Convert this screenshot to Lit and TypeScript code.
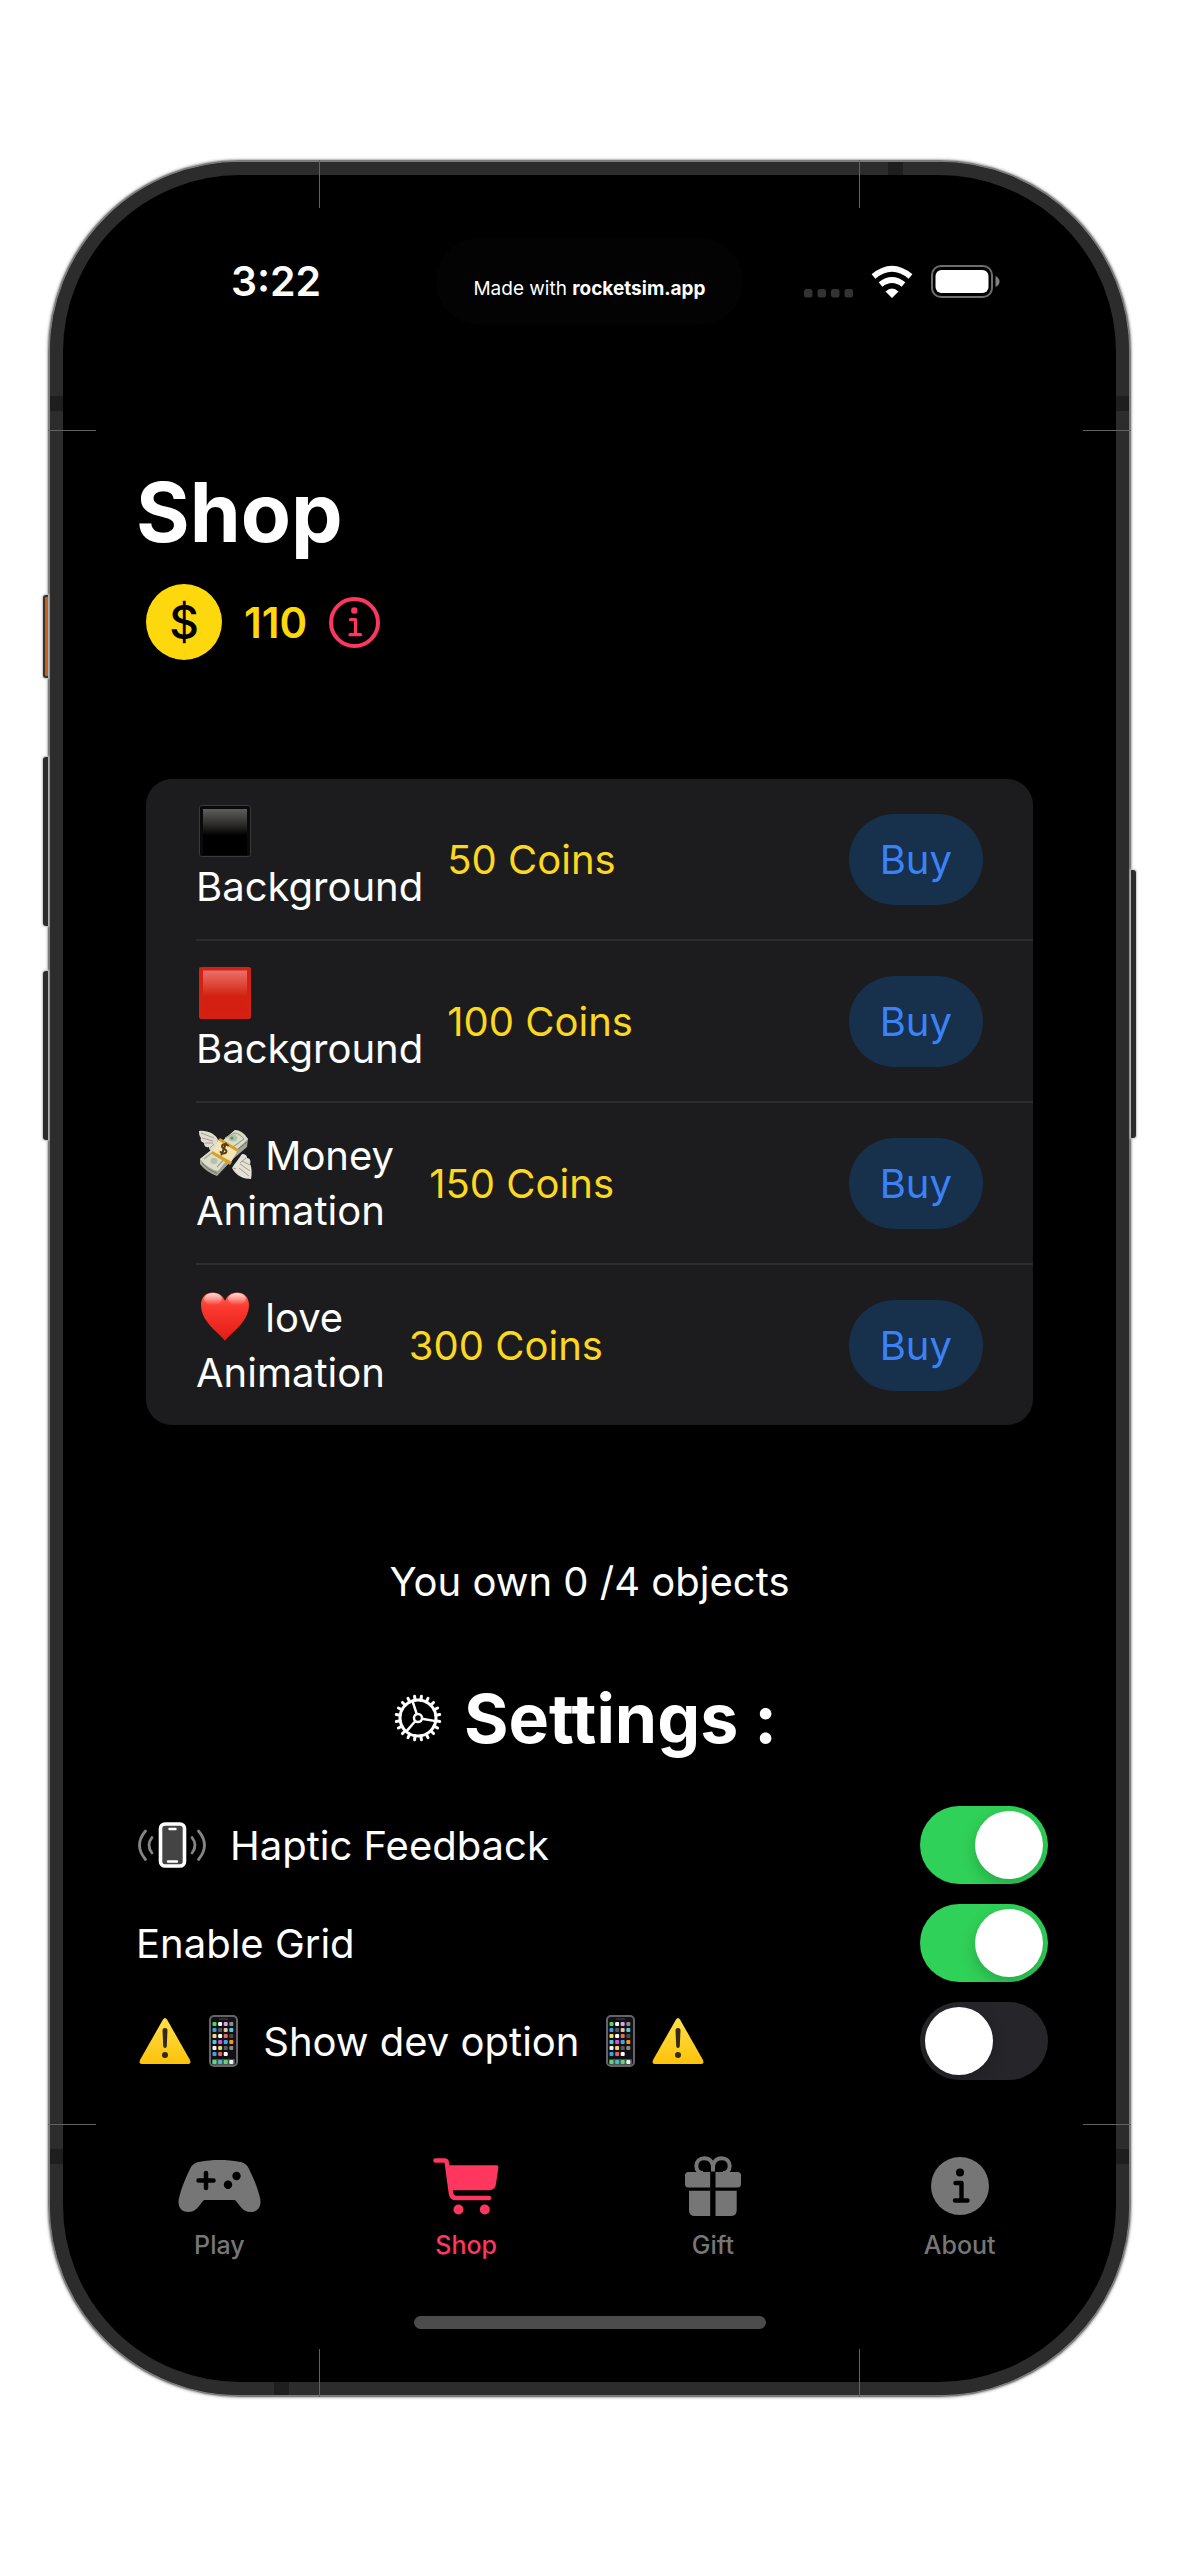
import { LitElement, html, svg, css, nothing } from "lit";
import type { TemplateResult } from "lit";
import { customElement, state } from "lit/decorators.js";
import { classMap } from "lit/directives/class-map.js";

type EmojiName = "black" | "red" | "money" | "heart" | "warning" | "phone";

interface ShopItem {
  emoji: EmojiName;
  first: string;
  second: string;
  price: number;
}

const ITEMS: ShopItem[] = [
  { emoji: "black", first: " ", second: "Background", price: 50 },
  { emoji: "red", first: " ", second: "Background", price: 100 },
  { emoji: "money", first: " Money ", second: "Animation", price: 150 },
  { emoji: "heart", first: " love", second: "Animation", price: 300 },
];

const APP_GRID = [
  ["#4cd964", "#f4f4f4", "#d9a8e0", "#8e8e93"],
  ["#3aa0e8", "#5a5a5e", "#d8c8a8", "#5ac8e0"],
  ["#f6dc6a", "#ffffff", "#e86a5a", "#4a4a4e"],
  ["#4fc8d8", "#d850e0", "#3aa8f0", "#ff9500"],
  ["#f4f4f4", "#f0d860", "#5a5a5e", "#8a8a8e"],
  ["#38a8e8", "#e86060", "#ffffff"],
];
const DOCK = ["#5fd878", "#48b8d8", "#5fd878", "#e8f4f0"];

const emojiArt: Record<EmojiName, () => TemplateResult> = {
  black: () => svg`
    <defs><linearGradient id="gk" x2="0" y2="1"><stop offset="0" stop-color="#5e5e5e"/><stop offset=".35" stop-color="#2a2928"/><stop offset=".58" stop-color="#000"/></linearGradient></defs>
    <rect x="3.500" y=".5" width="51" height="51" rx="2" fill="#0a0a0a" stroke="#3a3a3a"/>
    <rect x="7" y="4" width="44" height="46" fill="url(#gk)"/>`,
  red: () => svg`
    <defs><linearGradient id="gr" x2="0" y2="1"><stop offset="0" stop-color="#ea7068"/><stop offset=".35" stop-color="#dc4334"/><stop offset=".58" stop-color="#d32011"/></linearGradient></defs>
    <rect x="3" y="0" width="52" height="52" rx="2" fill="#d32214"/>
    <rect x="7" y="3.500" width="44" height="44" fill="url(#gr)"/>`,
  money: () => svg`
    <g transform="translate(3 1)">
      <path d="M1 29 22 12 36 0Q44 0 49 9L48 17 34 29 18 46Q7 42 1 34Z" fill="#a3a596"/>
      <path d="M1 29 20 14 36 0Q43 1 49 9 34 22 19 41 9 39 1 29Z" fill="#dcddcb"/>
      <path d="M5 29 19 18M18 37 30 24M26 8 36 3Q41 4 45 9L34 17" fill="none" stroke="#9fa48f" stroke-width="1.2"/>
      <path d="M3 33Q9 40 18 43.500M38 20 48 12" fill="none" stroke="#72756a" stroke-width="1"/>
      <ellipse cx="34" cy="8" rx="4.500" ry="3.500" fill="#b6c2a6"/><circle cx="33" cy="8" r="1.600" fill="#4d9a63"/>
      <ellipse cx="15" cy="31" rx="3.500" ry="3" fill="#b6c2a6"/>
      <path d="M20 9 39 20 31 34 12 22Z" fill="#f3e5b8"/>
      <path d="M21 8 40 19.500 38.500 22 19.500 10.500ZM13.500 21 33 32 31 35 12 23.500Z" fill="#d9a026"/>
      <path d="M29 15.500c-2-2-6-1.500-6 1s5 2.500 4.500 5-4.500 2.500-6 .5M27 13.500 22.500 24.500" fill="none" stroke="#5a3d12" stroke-width="2" stroke-linecap="round"/>
      <path d="M0 1C8 0 17 4 19 10 18 14 16 18 13 21 11 21 10 19 10 17 7 18 5 16 5 13 2 12 1 10 2 8 0 6 0 3 0 1Z" fill="#dfdcd0"/>
      <path d="M2 3 15 8M3 8 14 11M6 13 14 13M11 18 15 14" stroke="#a39e90" stroke-width="1" fill="none"/>
      <path d="M52 49C45 49 37 46 33 38 36 33 39 30 43 24 46 24 48 25 48 28 51 28 52 31 51 34 53 37 53 45 52 49Z" fill="#e4e1d6"/>
      <path d="M50 46 40 38M51 41 41 34M51 35 43 31M47 28 41 33M37 39 34 38" stroke="#a39e90" stroke-width="1" fill="none"/>
    </g>`,
  heart: () => svg`
    <defs>
      <linearGradient id="gh" x2="0" y2="1"><stop offset="0" stop-color="#ff6a5c"/><stop offset=".3" stop-color="#fb3a30"/><stop offset="1" stop-color="#e31a14"/></linearGradient>
      <linearGradient id="gs" x2="0" y2="1"><stop offset="0" stop-color="#fff" stop-opacity=".75"/><stop offset="1" stop-color="#fff" stop-opacity="0"/></linearGradient>
    </defs>
    <path d="M29 50C26 44 5 32 5 14 5 6 10 1.500 17 1.500 23 1.500 27 5 29 10 31 5 35 1.500 41 1.500 48 1.500 53 6 53 14 53 32 32 44 29 50Z" fill="url(#gh)"/>
    <ellipse cx="17" cy="8" rx="9" ry="6" fill="url(#gs)"/>
    <ellipse cx="41" cy="8" rx="9" ry="6" fill="url(#gs)"/>`,
  warning: () => svg`
    <defs><linearGradient id="gw" x2="0" y2="1"><stop offset="0" stop-color="#ffe04a"/><stop offset="1" stop-color="#fdc20a"/></linearGradient></defs>
    <path d="M27 4.500Q29 1.500 31 4.500L54 45Q55.500 49 51.500 49H6.500Q2.500 49 4 45Z" fill="url(#gw)"/>
    <path d="M26.500 15Q26.500 13 29 13T31.500 15L30.800 31Q30.600 33 29 33T27.200 31Z" fill="#33291a"/>
    <circle cx="29" cy="40" r="3" fill="#33291a"/>`,
  phone: () => svg`
    <rect x="16" y="1" width="27" height="50" rx="4" fill="#111113" stroke="#66646a" stroke-width="2"/>
    <rect x="25" y="3" width="9" height="2" rx="1" fill="#2c2c2e"/>
    ${APP_GRID.map((row, r) => row.map((c, i) => svg`<rect x=${18.5 + i * 5.6} y=${7 + r * 6} width="4" height="4" rx="1" fill=${c}/>`))}
    <rect x="18" y="44" width="23" height="6" rx="1" fill="#4c5450"/>
    ${DOCK.map((c, i) => svg`<rect x=${18.5 + i * 5.6} y="45" width="4" height="4" rx="1" fill=${c}/>`)}`,
};

const emoji = (name: EmojiName) =>
  html`<svg class="emoji" viewBox="0 0 58 52" aria-hidden="true">${emojiArt[name]()}</svg>`;

const tabArt = {
  play: svg`<svg width="83" height="52" viewBox="0 0 83 52" aria-hidden="true">
    <path fill="currentColor" d="M22 1.700C34-.5 49-.5 61 1.700 66 2.500 69 4.500 71 9 76 19 80 29 82 38 84 46 80 52 73 52 64 52 63 46 57 40H26C20 46 19 52 10 52 3 52-1 46 1 38 3 29 7 19 12 9 14 4.500 17 2.500 22 1.700Z"/>
    <path d="M28 13V28M20.500 20.500H35.500" stroke="#000" stroke-width="4.500" stroke-linecap="round"/>
    <circle cx="58.500" cy="16" r="4.200"/><circle cx="50" cy="24.700" r="4.200"/></svg>`,
  shop: svg`<svg width="66" height="57" viewBox="0 0 66 57" aria-hidden="true">
    <path d="M2.500 2.500H11.500Q13.500 2.500 13.800 4.500L18 35.500Q18.800 40 23 40H56" fill="none" stroke="currentColor" stroke-width="4.600" stroke-linecap="round"/>
    <path fill="currentColor" d="M15 7.200H63.500Q65.700 7.200 65.400 9.400L63 26Q62 32.200 56 32.200H19Z"/>
    <circle cx="25.500" cy="51.500" r="5" fill="currentColor"/><circle cx="51.800" cy="51.500" r="5" fill="currentColor"/></svg>`,
  gift: svg`<svg width="56" height="60" viewBox="0 0 56 60" aria-hidden="true">
    <path fill="currentColor" d="M3.500 16H25.200V31.500H3.500Q0 31.500 0 28V19.500Q0 16 3.500 16ZM30.500 16H52.500Q56 16 56 19.500V28Q56 31.500 52.500 31.500H30.500ZM4 34.800H25.200V60H10Q4 60 4 54ZM30.500 34.800H51.700V54Q51.700 60 45.700 60H30.500Z"/>
    <path fill="none" stroke="currentColor" stroke-width="4" d="M28 15.500V12C28 6 24.500 2.200 19.500 2.200 14.500 2.200 11.300 5.500 11.300 10 11.300 14.500 14.500 17 18 17M28 15.500V12C28 6 31.500 2.200 36.500 2.200 41.500 2.200 44.700 5.500 44.700 10 44.700 14.500 41.500 17 38 17"/></svg>`,
  about: svg`<svg width="58" height="58" viewBox="0 0 58 58" aria-hidden="true">
    <circle cx="29" cy="29" r="29" fill="currentColor"/><circle cx="29" cy="15.500" r="4"/>
    <path d="M24.500 26H30.500V43.500M24 43.500H36.500" fill="none" stroke="#000" stroke-width="4.400" stroke-linecap="round" stroke-linejoin="round"/></svg>`,
};

const TABS = [
  { id: "play", label: "Play" },
  { id: "shop", label: "Shop" },
  { id: "gift", label: "Gift" },
  { id: "about", label: "About" },
] as const;

const polar = (r: number, deg: number) => {
  const a = (deg * Math.PI) / 180;
  return `${(24 + r * Math.cos(a)).toFixed(2)} ${(24 + r * Math.sin(a)).toFixed(2)}`;
};

const gearIcon = () => html`<svg class="gear" viewBox="0 0 48 48" aria-hidden="true">
  <g fill="none" stroke="currentColor">
    <circle cx="24" cy="24" r="18" stroke-width="3"/>
    <circle cx="24" cy="24" r="4" stroke-width="2.500"/>
    <path stroke-width="2.500" d=${[252, 10, 131].map((d) => `M${polar(4, d)}L${polar(18, d)}`).join("")}/>
    <path stroke-width="3" stroke-linecap="round" d=${Array.from({ length: 20 }, (_, i) => `M${polar(18, i * 18 + 9)}L${polar(22, i * 18 + 9)}`).join("")}/>
  </g></svg>`;

const hapticIcon = () => html`<svg class="haptic" viewBox="0 0 68 46" aria-hidden="true">
  <rect x="22.500" y="2" width="24" height="42" rx="4.500" fill="#444" stroke="#fff" stroke-width="3.600"/>
  <path d="M31.500 7H37.500M30 39.500H39" stroke="#fff" stroke-width="2.400" stroke-linecap="round"/>
  <path d="M7.500 9Q-4.500 23 7.500 37.500M14 15.500Q8 23 14 31M60.500 9Q72.500 23 60.500 37.500M54 15.500Q60 23 54 31" fill="none" stroke="#858585" stroke-width="2.800" stroke-linecap="round"/></svg>`;

@customElement("app-root")
export class AppRoot extends LitElement {
  static styles = css`
    :host {
      display: block;
      background: #fff;
      color: #fff;
      font-family: Inter, "Liberation Sans", sans-serif;
      font-size: 40px;
      line-height: 55px;
    }
    * { box-sizing: border-box; }
    svg { display: block; flex: none; overflow: visible; }
    h1, h2, p, ul { margin: 0; padding: 0; }
    button, input { font: inherit; color: inherit; margin: 0; padding: 0; border: 0; }

    .stage { padding: 160px 48px; }
    .phone {
      position: relative;
      border: 2px solid #7c7c7c;
      border-radius: 192px;
      box-shadow: 0 0 0 1px #c4c4c4, 0 0 2px 2px #e4e4e4;
      background: #2c2c2c;
    }
    .bezel {
      border: 13px solid #2c2c2c;
      border-radius: 190px;
      background: #000;
      padding: 33px;
    }

    /* hardware details that lie over the frame */
    .side { position: absolute; width: 5px; background: #2c2c2c; border-radius: 3px 0 0 3px; box-shadow: 0 0 2px 1px #c4c4c4; }
    .action { left: -7px; top: 433px; height: 83px; background: #cb6018; border: 2px solid #333; border-right: 0; }
    .volup { left: -7px; top: 595px; height: 169px; }
    .voldown { left: -7px; top: 809px; height: 169px; }
    .power { right: -7px; top: 708px; height: 268px; border-radius: 0 3px 3px 0; }
    .band { position: absolute; background: #1e1e1e; }
    .band.side-l { left: 0; width: 13px; height: 15px; }
    .band.side-r { right: 0; width: 13px; height: 15px; }
    .band.high { top: 234px; }
    .band.low { bottom: 231px; }
    .band.on-top { top: 0; right: 226px; width: 15px; height: 13px; }
    .band.on-bottom { bottom: 0; left: 224px; width: 15px; height: 13px; }
    .hair { position: absolute; background: #626262; }
    .hair.h { width: 48px; height: 1px; }
    .hair.v { width: 1px; height: 48px; }
    .hair.l { left: -2px; }
    .hair.r { right: -2px; }
    .hair.t { top: -2px; }
    .hair.b { bottom: -2px; }
    .hair.h.upper { top: 268px; }
    .hair.h.lower { bottom: 270px; }
    .hair.v.near { left: 269px; }
    .hair.v.far { right: 269px; }

    .status {
      display: grid;
      grid-template-columns: 1fr 307px 1fr;
      align-items: center;
      padding-top: 30px;
    }
    .time { justify-self: center; padding-left: 20px; font-weight: 600; font-size: 41px; }
    .island {
      height: 87px;
      border-radius: 44px;
      background: #030303;
      display: flex;
      align-items: center;
      justify-content: center;
      padding-top: 15px;
      font-size: 19px;
      line-height: 24px;
      white-space: nowrap;
    }
    .indicators { display: flex; align-items: flex-end; gap: 18px; padding-left: 61px; }

    .content { padding: 138px 40px 0; }
    .title { font-size: 82px; line-height: 100px; font-weight: 700; }
    .wallet { display: flex; align-items: center; margin: 21px 0 0 10px; gap: 22px; color: #fdd80c; }
    .coin {
      width: 76px; height: 76px; border-radius: 50%;
      background: #fdd80c; color: #000;
      display: grid; place-items: center;
      font-size: 46px; font-weight: 500;
    }
    .balance { font-weight: 600; font-size: 42px; }
    .info { background: none; color: #ff375f; display: block; }

    .card {
      list-style: none;
      margin: 119px 10px 0;
      border-radius: 26px;
      background: #1c1c1e;
      padding-left: 50px;
    }
    .row {
      display: flex;
      align-items: center;
      gap: 24px;
      padding: 25px 50px 25px 0;
      border-bottom: 2px solid #2d2d2f;
    }
    .row:last-child { border-bottom: 0; }
    .name { white-space: pre; }
    .price { color: #fdd720; }
    .emoji { display: inline-block; width: 58px; height: 52px; vertical-align: -11px; }
    .buy {
      margin-left: auto;
      padding: 18px 31px;
      border-radius: 46px;
      background: #17304b;
      color: #3b82f7;
    }
    .buy[disabled] { opacity: 0.5; }

    .owned { text-align: center; margin-top: 129px; }
    .settings-title {
      display: flex;
      align-items: center;
      justify-content: center;
      gap: 22px;
      margin-top: 67px;
      padding-right: 8px;
      font-size: 68px;
      line-height: 84px;
      font-weight: 700;
    }
    .gear { width: 48px; height: 48px; }
    .settings { display: grid; gap: 20px; margin: 46px -5px 0 0; }
    .setting { display: flex; align-items: center; justify-content: space-between; height: 78px; white-space: pre; }
    .setting-label { display: flex; align-items: center; flex: 1; }
    .haptic { width: 68px; height: 46px; margin: 0 24px 0 2px; }
    .switch {
      appearance: none;
      display: block;
      width: 128px;
      height: 78px;
      padding: 5px;
      border-radius: 39px;
      background: #26252a;
    }
    .switch::before {
      content: "";
      display: block;
      width: 68px;
      height: 68px;
      border-radius: 50%;
      background: #fff;
      box-shadow: 0 6px 16px rgba(0, 0, 0, 0.2);
    }
    .switch:checked { background: #30d158; }
    .switch:checked::before { margin-left: auto; }

    .tabs { display: grid; grid-template-columns: repeat(4, 1fr); padding-top: 76px; }
    .tab {
      display: flex;
      flex-direction: column;
      align-items: center;
      gap: 13px;
      color: #767676;
      text-decoration: none;
      font-size: 25px;
      line-height: 32px;
      font-weight: 500;
    }
    .tab.active { color: #ff375f; }
    .tab-icon { height: 60px; display: grid; place-items: center; }
    .home { width: 352px; height: 13px; border-radius: 7px; background: #4c4c4c; margin: 55px auto 20px; }
  `;

  @state() private haptic = true;
  @state() private grid = true;
  @state() private dev = false;
  @state() private coins = 110;
  @state() private owned: number[] = [];

  private buy(index: number) {
    const { price } = ITEMS[index];
    if (this.coins < price || this.owned.includes(index)) return;
    this.coins -= price;
    this.owned = [...this.owned, index];
  }

  private renderStatus() {
    return html`<header class="status">
      <div class="time">3:22</div>
      <div class="island"><span>Made with <b>rocketsim.app</b></span></div>
      <div class="indicators">
        <svg width="49" height="9" viewBox="0 0 49 9" aria-hidden="true">
          ${[0, 1, 2, 3].map((i) => svg`<rect x=${i * 13.5} width="8.500" height="8.500" rx="2.500" fill="#333"/>`)}
        </svg>
        <svg width="42" height="32" viewBox="0 0 42 32" aria-hidden="true">
          <path d="M2.500 10.500Q21-5 39.500 10.500M9.500 18.500Q21 9.500 32.500 18.500" fill="none" stroke="#fff" stroke-width="6"/>
          <path d="M21 32 14.500 25.500Q21 19.500 27.500 25.500Z" fill="#fff"/>
        </svg>
        <svg width="69" height="33" viewBox="0 0 69 33" aria-hidden="true">
          <rect x="1" y="1" width="60" height="31" rx="9" fill="none" stroke="#6e6e6e" stroke-width="2"/>
          <rect x="4.500" y="5" width="53" height="23" rx="6" fill="#fff"/>
          <path d="M64.500 11Q68.500 13 68.500 16.500T64.500 22Z" fill="#808080"/>
        </svg>
      </div>
    </header>`;
  }

  private renderItem(item: ShopItem, i: number) {
    return html`<li class="row">
      <span class="name">${emoji(item.emoji)}${item.first}<br />${item.second}</span>
      <span class="price">${item.price} Coins</span>
      <button class="buy" ?disabled=${this.owned.includes(i)} @click=${() => this.buy(i)}>Buy</button>
    </li>`;
  }

  private renderSetting(id: string, label: unknown, on: boolean, set: (v: boolean) => void) {
    return html`<div class="setting">
      <label class="setting-label" for=${id}>${label}</label>
      <input class="switch" type="checkbox" role="switch" id=${id} .checked=${on}
        @change=${(e: Event) => set((e.target as HTMLInputElement).checked)} />
    </div>`;
  }

  render() {
    return html`<div class="stage"><div class="phone">
      <i class="side action"></i><i class="side volup"></i><i class="side voldown"></i><i class="side power"></i>
      <div class="bezel">
        ${this.renderStatus()}
        <main class="content">
          <h1 class="title">Shop</h1>
          <div class="wallet">
            <span class="coin" aria-hidden="true">$</span>
            <span class="balance">${this.coins}</span>
            <button class="info" aria-label="About coins">
              <svg width="51" height="51" viewBox="0 0 51 51" aria-hidden="true">
                <circle cx="25.500" cy="25.500" r="23.500" fill="none" stroke="currentColor" stroke-width="4"/>
                <circle cx="25.300" cy="13.500" r="3.200" fill="currentColor"/>
                <path d="M21.500 22.500H26.500V37.700M21 37.700H31.500" fill="none" stroke="currentColor" stroke-width="3.200" stroke-linecap="round" stroke-linejoin="round"/>
              </svg>
            </button>
          </div>
          <ul class="card">${ITEMS.map((item, i) => this.renderItem(item, i))}</ul>
          <p class="owned">You own ${this.owned.length} /${ITEMS.length} objects</p>
          <h2 class="settings-title">${gearIcon()}<span>Settings :</span></h2>
          <section class="settings">
            ${this.renderSetting("haptic", html`${hapticIcon()}<span>Haptic Feedback</span>`, this.haptic, (v) => (this.haptic = v))}
            ${this.renderSetting("grid", html`<span>Enable Grid</span>`, this.grid, (v) => (this.grid = v))}
            ${this.renderSetting("dev", html`<span>${emoji("warning")}${emoji("phone")} Show dev option ${emoji("phone")}${emoji("warning")}</span>`, this.dev, (v) => (this.dev = v))}
          </section>
        </main>
        <nav class="tabs">
          ${TABS.map((t) => html`<a class=${classMap({ tab: true, active: t.id === "shop" })} href="#${t.id}"
            aria-current=${t.id === "shop" ? "page" : nothing}><span class="tab-icon">${tabArt[t.id]}</span>${t.label}</a>`)}
        </nav>
        <div class="home"></div>
      </div>
      <i class="band side-l high"></i><i class="band side-r high"></i>
      <i class="band side-l low"></i><i class="band side-r low"></i>
      <i class="band on-top"></i><i class="band on-bottom"></i>
      <i class="hair h l upper"></i><i class="hair h r upper"></i>
      <i class="hair h l lower"></i><i class="hair h r lower"></i>
      <i class="hair v t near"></i><i class="hair v t far"></i>
      <i class="hair v b near"></i><i class="hair v b far"></i>
    </div></div>`;
  }
}
